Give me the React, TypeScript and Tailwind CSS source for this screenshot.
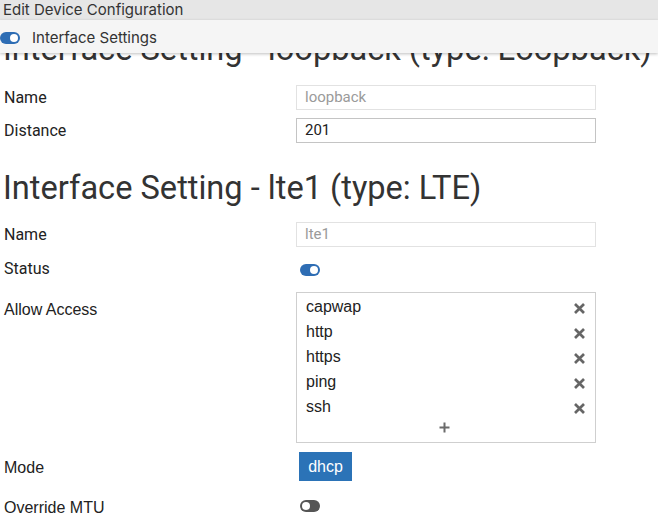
import React from 'react';

const Toggle = ({ on }: { on: boolean }) => (
  <span
    className={`inline-flex h-[12px] w-[20px] items-center rounded-full px-[2px] ${
      on ? 'justify-end bg-[#2e6db4]' : 'justify-start bg-[#555555]'
    }`}
  >
    <span className="h-[8px] w-[8px] rounded-full bg-white"></span>
  </span>
);

const XIcon = () => (
  <svg width="13" height="13" viewBox="0 0 13 13" className="text-[#666]">
    <path d="M2 2 L11 11 M11 2 L2 11" stroke="currentColor" strokeWidth="2.7" />
  </svg>
);

const Row = ({ label, children, className = '' }: { label: string; children: React.ReactNode; className?: string }) => (
  <div className={`flex items-center ${className}`}>
    <div className="w-[296px] pl-[4px] text-[16px] text-[#222]">{label}</div>
    <div className="flex-1">{children}</div>
  </div>
);

const access = ['capwap', 'http', 'https', 'ping', 'ssh'];

export default function App() {
  return (
    <div className="relative h-[528px] w-[658px] overflow-hidden bg-white font-['Roboto',sans-serif] text-[#222]">
      {/* sticky header over the scrolled form */}
      <div className="absolute inset-x-0 top-0 z-10 font-['Inter',sans-serif]">
        <div className="h-[20px] bg-[#e6e6e6] pl-[3px] text-[15px] leading-[20px] text-[#333]">
          Edit Device Configuration
        </div>
        <div className="flex h-[33px] items-center gap-[12px] bg-[#f5f5f5] pt-[3px] shadow-[0_1px_3px_rgba(0,0,0,0.25)]">
          <Toggle on />
          <span className="text-[15px] text-[#333]">Interface Settings</span>
        </div>
      </div>

      <div className="pt-[30px]">
        <h2 className="pl-[3px] text-[32.6px] leading-[38px] text-[#333]">Interface Setting - loopback (type: Loopback)</h2>

        <div className="mt-[17px] flex flex-col gap-[8px]">
          <Row label="Name">
            <div className="flex h-[25px] w-[300px] items-center border border-[#e2e2e2] px-[8px] text-[15px] text-[#9a9a9a]">
              loopback
            </div>
          </Row>
          <Row label="Distance">
            <div className="flex h-[25px] w-[300px] items-center border border-[#c4c4c4] px-[8px] text-[15px] text-[#222]">
              201
            </div>
          </Row>
        </div>

        <h2 className="mt-[26px] pl-[3px] text-[32.6px] leading-[38px] text-[#333]">Interface Setting - lte1 (type: LTE)</h2>

        <div className="mt-[15px] flex flex-col gap-[11px]">
          <Row label="Name">
            <div className="flex h-[25px] w-[300px] items-center border border-[#e2e2e2] px-[8px] text-[15px] text-[#9a9a9a]">
              lte1
            </div>
          </Row>
          <Row label="Status" className="-mt-[1px] h-[24px]">
            <div className="pl-[4px]">
              <Toggle on />
            </div>
          </Row>
          <div className="flex items-start">
            <div className="w-[296px] pl-[4px] pt-[6px] font-['Liberation_Sans',sans-serif] text-[16px] text-[#222]">
              Allow Access
            </div>
            <div className="h-[151px] w-[300px] border border-[#cfcfcf] pt-[3px] font-['Liberation_Sans',sans-serif]">
              {access.map((a) => (
                <div key={a} className="flex h-[25px] items-center justify-between pl-[9px] pr-[9px] text-[16px] text-[#222]">
                  <span className="-mt-[4px]">{a}</span>
                  <XIcon />
                </div>
              ))}
              <div className="flex justify-center pt-[1px] pr-[3px]">
                <svg width="11" height="11" viewBox="0 0 11 11" className="text-[#6b6b6b]">
                  <path d="M5.5 0.5 V10.5 M0.5 5.5 H10.5" stroke="currentColor" strokeWidth="2" />
                </svg>
              </div>
            </div>
          </div>
          <div className="-mt-[2px] flex items-center">
            <div className="w-[296px] pl-[4px] pt-[2px] font-['Liberation_Sans',sans-serif] text-[16px] text-[#222]">Mode</div>
            <div className="pl-[3px]">
              <div className="flex h-[29px] w-[53px] items-center justify-center bg-[#2b73b7] font-['Liberation_Sans',sans-serif] text-[16px] text-white">
                dhcp
              </div>
            </div>
          </div>
          <div className="flex h-[26px] items-center">
            <div className="w-[296px] pl-[4px] pt-[6px] font-['Liberation_Sans',sans-serif] text-[16px] text-[#222]">Override MTU</div>
            <div className="pl-[4px]">
              <Toggle on={false} />
            </div>
          </div>
        </div>
      </div>
    </div>
  );
}
